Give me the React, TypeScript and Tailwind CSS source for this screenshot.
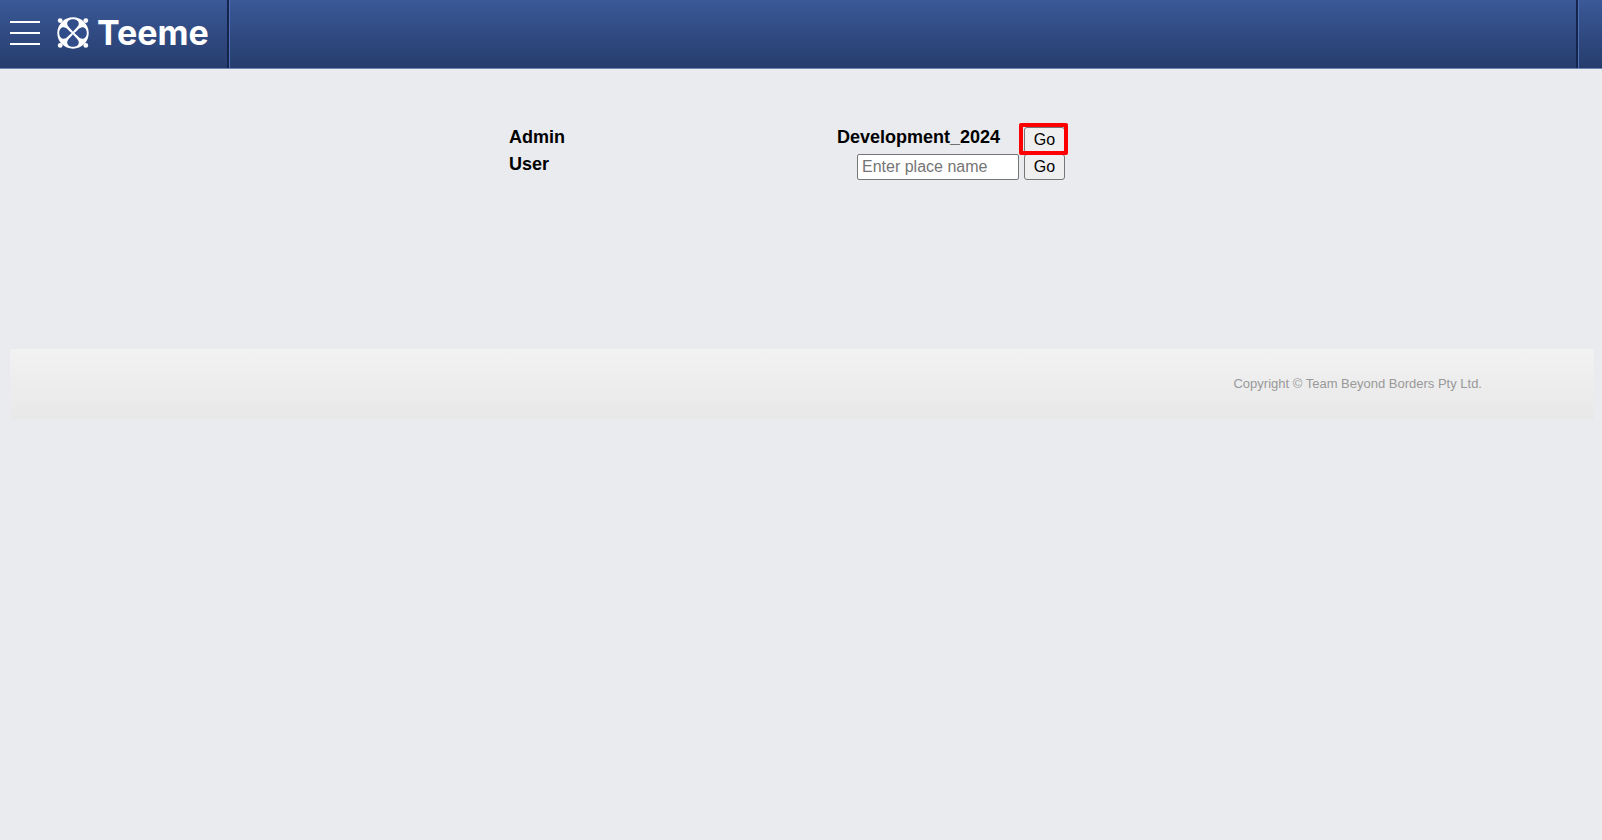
import React from 'react';

interface GoButtonProps {
  label: string;
}

const GoButton: React.FC<GoButtonProps> = ({ label }) => (
  <button type="submit" aria-label={label} className="block h-[26px] w-[41px] rounded-[3px] border border-[#767676] bg-[#efefef] text-base leading-5 text-black">
    Go
  </button>
);

const TeemeMark: React.FC = () => (
  <svg viewBox="0 0 32 32" className="size-8" aria-hidden="true">
    <g fill="#fff">
      <circle cx="3.2" cy="3.6" r="2.4" />
      <circle cx="28.8" cy="3.6" r="2.4" />
      <circle cx="3.2" cy="28.4" r="2.4" />
      <circle cx="28.8" cy="28.4" r="2.4" />
      <circle cx="16" cy="16" r="15.7" />
    </g>
    {/* Four petals cut out of the disc */}
    <g fill="#314e8a">
      <path id="petal" d="M16 14.8C14.2 12 10.2 9.8 10.2 6.6C10.2 3.8 12.8 2.2 16 2.2S21.8 3.8 21.8 6.6C21.8 9.8 17.8 12 16 14.8Z" />
      <use href="#petal" transform="rotate(90 16 16)" />
      <use href="#petal" transform="rotate(180 16 16)" />
      <use href="#petal" transform="rotate(270 16 16)" />
    </g>
  </svg>
);

const Header: React.FC = () => (
  <header className="flex h-[69px] border-b border-[#6f86b5] bg-linear-to-b from-[#3b5998] to-[#263d6d]">
    <div className="flex w-[229px] items-center border-r-2 border-[#14244a] pb-[3px] pl-[10px]">
      <button type="button" aria-label="Menu" className="flex flex-col gap-[9px]">
        <span className="h-[2px] w-[30px] bg-white" />
        <span className="h-[2px] w-[30px] bg-white" />
        <span className="h-[2px] w-[30px] bg-white" />
      </button>
      <a href="#" className="ml-[17px] flex items-center gap-2">
        <TeemeMark />
        <span className="font-[family-name:Inter] text-[34px] leading-10 font-bold text-white">Teeme</span>
      </a>
    </div>
    <div className="flex-1 border-l border-[#4f70b5]" />
    <div className="w-[26px] border-l-2 border-[#14244a]">
      <div className="h-full border-l border-[#4f70b5]" />
    </div>
  </header>
);

const PlaceForm: React.FC = () => (
  <main className="flex h-[280px] justify-center pt-[55px]">
    <div className="mr-7 w-[556px] text-lg font-bold leading-[27px] text-black">
      <form className="flex h-[27px] items-start justify-between" onSubmit={(e) => e.preventDefault()}>
        <span>Admin</span>
        <div className="flex gap-6">
          <span>Development_2024</span>
          <div className="relative pt-[3px] font-normal">
            <GoButton label="Go to Development_2024" />
            {/* Highlight frame over the active button */}
            <div className="pointer-events-none absolute -left-[5px] -right-[3px] -top-px z-10 h-8 rounded-[2px] border-4 border-[#fe0000]" />
          </div>
        </div>
      </form>
      <form className="flex h-[27px] items-start justify-between" onSubmit={(e) => e.preventDefault()}>
        <label htmlFor="place">User</label>
        <div className="flex gap-[5px] pt-[3px] font-normal">
          <input
            id="place"
            type="text"
            placeholder="Enter place name"
            className="h-[26px] w-[162px] rounded-[2px] border border-[#767676] bg-white px-1 text-base placeholder:text-[#757575]"
          />
          <GoButton label="Go to place" />
        </div>
      </form>
    </div>
  </main>
);

const App: React.FC = () => (
  <div className="min-h-screen bg-[#e9ebee] font-[family-name:'Liberation_Sans',sans-serif]">
    <Header />
    <PlaceForm />
    <footer className="ml-[10px] mr-2 flex h-[70px] justify-end bg-linear-to-b from-[#f2f2f2] to-[#e8e8e8] pt-[25px] pr-28">
      <p className="text-[13px] leading-5 text-[#999999]">Copyright © Team Beyond Borders Pty Ltd.</p>
    </footer>
  </div>
);

export default App;
